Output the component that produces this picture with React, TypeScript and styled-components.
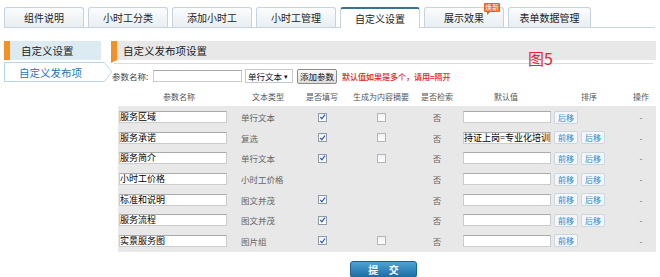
import styled, { createGlobalStyle } from 'styled-components';

const GlobalStyle = createGlobalStyle`
  body {
    margin: 0;
    background: #ffffff;
    font-family: 'Noto Sans CJK SC', 'Liberation Sans', sans-serif;
    font-size: 10px;
    color: #333333;
    white-space: nowrap;
  }
`;

type Row = {
  name: string;
  type: string;
  required: boolean;
  summary: boolean | null;
  defaultValue: string;
  up: boolean;
  down: boolean;
};

const tabs = ['组件说明', '小时工分类', '添加小时工', '小时工管理', '自定义设置', '展示效果', '表单数据管理'];

const rows: Row[] = [
  { name: '服务区域', type: '单行文本', required: true, summary: false, defaultValue: '', up: false, down: true },
  { name: '服务承诺', type: '复选', required: true, summary: false, defaultValue: '持证上岗=专业化培训', up: true, down: true },
  { name: '服务简介', type: '单行文本', required: true, summary: false, defaultValue: '', up: true, down: true },
  { name: '小时工价格', type: '小时工价格', required: false, summary: null, defaultValue: '', up: true, down: true },
  { name: '标准和说明', type: '图文并茂', required: true, summary: null, defaultValue: '', up: true, down: true },
  { name: '服务流程', type: '图文并茂', required: true, summary: null, defaultValue: '', up: true, down: true },
  { name: '实景服务图', type: '图片组', required: true, summary: false, defaultValue: '', up: true, down: false },
];

export default function App() {
  return (
    <>
      <GlobalStyle />
      <Page>
        <TabBar>
          {tabs.map((t, i) => (
            <Tab key={t} $active={i === 4} $wide={i === 6}>
              {t}
              {i === 5 && <Badge>焕新</Badge>}
            </Tab>
          ))}
        </TabBar>

        <Body>
          <Sidebar>
            <SideHeader>自定义设置</SideHeader>
            <SideItem>
              自定义发布项
              <Arrow viewBox="0 0 10 22">
                <path d="M0 0.5 L1 0.5 L9 11 L1 21.5 L0 21.5" fill="#ffffff" stroke="#b9d4e6" />
              </Arrow>
            </SideItem>
          </Sidebar>

          <Main>
            <PanelTitle>
              自定义发布项设置
              <FigureMark>图5</FigureMark>
            </PanelTitle>

            <FormRow>
              <Label>参数名称:</Label>
              <TextBox $w={89} />
              <Select>
                单行文本 <Caret>▾</Caret>
              </Select>
              <AddButton>添加参数</AddButton>
              <Hint>默认值如果是多个，请用=隔开</Hint>
            </FormRow>

            <HeadRow>
              <HeadCell>参数名称</HeadCell>
              <HeadCell>文本类型</HeadCell>
              <HeadCell>是否填写</HeadCell>
              <HeadCell>生成为内容摘要</HeadCell>
              <HeadCell>是否检索</HeadCell>
              <HeadCell>默认值</HeadCell>
              <HeadCell>排序</HeadCell>
              <HeadCell>操作</HeadCell>
            </HeadRow>

            <TableBody>
              {rows.map((r) => (
                <BodyRow key={r.name}>
                  <Cell>
                    <TextBox $w={108} $dark>{r.name}</TextBox>
                  </Cell>
                  <Cell $muted>{r.type}</Cell>
                  <Cell $center>{r.required && <Check $checked />}</Cell>
                  <Cell $center>{r.summary !== null && <Check $checked={r.summary} />}</Cell>
                  <Cell $center $muted>否</Cell>
                  <Cell $pad={3}>
                    <TextBox $w={88} $dark>{r.defaultValue}</TextBox>
                  </Cell>
                  <Cell $pad={2} $gap={3}>
                    {r.up && <MoveButton>前移</MoveButton>}
                    {r.down && <MoveButton>后移</MoveButton>}
                  </Cell>
                  <Cell $center $muted>-</Cell>
                </BodyRow>
              ))}
            </TableBody>

            <Footer>
              <Submit>提 交</Submit>
            </Footer>
          </Main>
        </Body>
      </Page>
    </>
  );
}

function Check({ $checked }: { $checked: boolean }) {
  return (
    <CheckBox $checked={$checked}>
      {$checked && (
        <svg width="8" height="8" viewBox="0 0 8 8">
          <path d="M1.5 4 L3.3 6 L6.8 1.2" fill="none" stroke="#2c56b8" strokeWidth="1.3" />
        </svg>
      )}
    </CheckBox>
  );
}

const columns = '122px 56px 52px 66px 46px 92px 74px 30px';

const Page = styled.div`
  width: 660px;
  height: 277px;
  padding: 7px 5px 0 4px;
  box-sizing: border-box;
  overflow: hidden;
`;

const TabBar = styled.div`
  display: flex;
  gap: 4px;
  height: 20px;
  border-bottom: 1px solid #c8d5de;
  width: 651px;
`;

const Tab = styled.div<{ $active?: boolean; $wide?: boolean }>`
  position: relative;
  width: ${(p) => (p.$wide ? 83 : 80)}px;
  height: ${(p) => (p.$active ? 21 : 20)}px;
  box-sizing: border-box;
  display: flex;
  align-items: center;
  justify-content: center;
  border: 1px solid #c6d3dd;
  border-bottom: none;
  border-top: ${(p) => (p.$active ? '2px solid #3d6f90' : '1px solid #c6d3dd')};
  border-radius: 3px 3px 0 0;
  background: ${(p) =>
    p.$active ? '#ffffff' : 'linear-gradient(#fbfcfd, #e8eef2)'};
  color: #222222;
  font-size: 10px;
`;

const Badge = styled.span`
  position: absolute;
  right: 3px;
  top: -5px;
  height: 9px;
  padding: 0 1px;
  background: #f25b1a;
  color: #ffffff;
  font-size: 7px;
  line-height: 9px;
  border-radius: 1px;
  &::after {
    content: '';
    position: absolute;
    left: 3px;
    bottom: -3px;
    border-left: 3px solid #f25b1a;
    border-bottom: 3px solid transparent;
  }
`;

const Body = styled.div`
  display: flex;
  margin-top: 13px;
`;

const Sidebar = styled.div`
  width: 107px;
  flex: none;
`;

const SideHeader = styled.div`
  height: 19px;
  display: flex;
  align-items: center;
  padding-left: 11px;
  width: 97px;
  box-sizing: border-box;
  background: #dceaf2;
  border-left: 6px solid #f39125;
  font-size: 10.5px;
  color: #222222;
`;

const SideItem = styled.div`
  position: relative;
  margin-top: 2px;
  height: 20px;
  width: 100px;
  box-sizing: border-box;
  display: flex;
  align-items: center;
  padding-left: 14px;
  border: 1px solid #b9d4e6;
  border-right: none;
  background: #ffffff;
  color: #1f73b4;
  font-size: 10.5px;
`;

const Arrow = styled.svg`
  position: absolute;
  right: -9px;
  top: -1px;
  width: 10px;
  height: 20px;
`;

const Main = styled.div`
  position: relative;
  width: 545px;
  flex: none;
`;

const PanelTitle = styled.div`
  height: 19px;
  display: flex;
  align-items: center;
  padding-left: 6px;
  background: #e8e8e8;
  border-left: 6px solid #f39125;
  font-size: 10.5px;
  color: #1a1a1a;
  border-bottom: 3px solid #ffffff;
  box-shadow: 0 4px 0 -3px #dddddd;
`;

const FigureMark = styled.span`
  position: absolute;
  left: 417px;
  top: 7px;
  font-size: 16px;
  line-height: 20px;
  color: #e5262c;
`;

const FormRow = styled.div`
  display: flex;
  align-items: center;
  height: 16px;
  margin-top: 5px;
  padding-left: 1px;
`;

const Label = styled.span`
  color: #444444;
  font-size: 8.5px;
  margin-right: 2px;
  width: 39px;
`;

const TextBox = styled.div<{ $w: number; $dark?: boolean }>`
  width: ${(p) => p.$w}px;
  height: 12px;
  box-sizing: border-box;
  background: #ffffff;
  border: 1px solid #cccccc;
  border-top-color: #aaaaaa;
  font-size: 9px;
  line-height: 10px;
  color: ${(p) => (p.$dark ? '#000000' : '#333333')};
  overflow: hidden;
`;

const Select = styled.div`
  margin-left: 3px;
  width: 48px;
  height: 14px;
  box-sizing: border-box;
  border: 1px solid #c9c9c9;
  display: flex;
  align-items: center;
  padding-left: 2px;
  font-size: 8.5px;
  color: #111111;
  background: #ffffff;
`;

const Caret = styled.span`
  font-size: 7px;
  margin-left: 2px;
`;

const AddButton = styled.div`
  margin-left: 4px;
  width: 40px;
  height: 15px;
  box-sizing: border-box;
  border: 1px solid #8c8c8c;
  border-radius: 2px;
  background: linear-gradient(#fafafa, #dcdcdc);
  display: flex;
  align-items: center;
  justify-content: center;
  font-size: 8.5px;
  color: #111111;
`;

const Hint = styled.span`
  margin-left: 5px;
  color: #e8141a;
  font-size: 8px;
  font-weight: 500;
`;

const HeadRow = styled.div`
  display: grid;
  grid-template-columns: ${columns};
  margin-left: 7px;
  height: 20px;
  align-items: center;
`;

const HeadCell = styled.div`
  text-align: center;
  color: #555555;
  font-size: 8px;
  margin-top: 4px;
`;

const TableBody = styled.div`
  margin-top: 2px;
  margin-left: 7px;
  padding: 1px 0;
  background: #e8e8e8;
`;

const BodyRow = styled.div`
  display: grid;
  grid-template-columns: ${columns};
  height: 20.6px;
  align-items: center;
`;

const Cell = styled.div<{ $center?: boolean; $muted?: boolean; $pad?: number; $gap?: number }>`
  display: flex;
  align-items: center;
  justify-content: ${(p) => (p.$center ? 'center' : 'flex-start')};
  padding-left: ${(p) => (p.$center ? 0 : p.$pad ?? 1)}px;
  gap: ${(p) => p.$gap ?? 0}px;
  color: ${(p) => (p.$muted ? '#666666' : '#333333')};
  font-size: 8.5px;
`;

const CheckBox = styled.span<{ $checked: boolean }>`
  width: 9px;
  height: 9px;
  box-sizing: border-box;
  border: 1px solid ${(p) => (p.$checked ? '#8f9ba6' : '#b0b6bc')};
  background: linear-gradient(#eef1f4, #ffffff);
  display: inline-flex;
  align-items: center;
  justify-content: center;
`;

const MoveButton = styled.div`
  width: 24px;
  height: 13px;
  box-sizing: border-box;
  border: 1px solid #cbd7e0;
  background: #f3f7fa;
  border-radius: 2px;
  display: flex;
  align-items: center;
  justify-content: center;
  font-size: 8px;
  color: #2a88cc;
`;

const Footer = styled.div`
  display: flex;
  justify-content: center;
  margin-top: 9px;
`;

const Submit = styled.div`
  width: 67px;
  height: 17px;
  border-radius: 3px;
  border: 1px solid #1d5f8e;
  box-sizing: border-box;
  background: linear-gradient(#4ea3d4, #1c6da4);
  color: #ffffff;
  font-size: 10px;
  font-weight: bold;
  letter-spacing: 4px;
  display: flex;
  align-items: center;
  justify-content: center;
  padding-left: 4px;
`;
